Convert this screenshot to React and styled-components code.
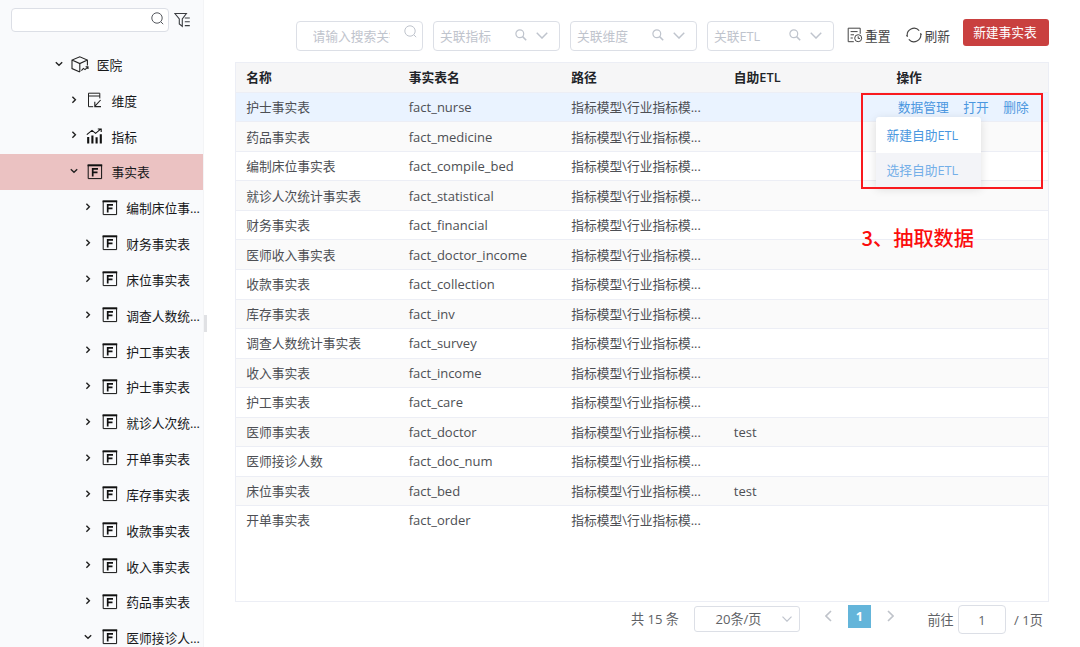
import React from 'react';
import styled, { createGlobalStyle } from 'styled-components';

const Global = createGlobalStyle`
  * { box-sizing: border-box; }
  body { margin: 0; background: #fff; overflow: hidden; }
  body, button, input { font-family: "Open Sans", "Noto Sans CJK SC", sans-serif; font-size: 12.75px; }
`;

const Page = styled.div`
  position: relative;
  display: flex;
  width: 1080px;
  height: 647px;
  overflow: hidden;
`;

/* ---------- sidebar ---------- */
const Sidebar = styled.aside`
  width: 203.5px;
  flex: none;
  overflow: hidden;
  background: #f9fafc;
  border-right: 1px solid #f3f4f6;
`;
const SideSearch = styled.div`
  display: flex;
  align-items: flex-start;
  gap: 5px;
  height: 46.8px;
  padding: 8px 0 0 11px;
`;
const SideInput = styled.div`
  display: flex;
  justify-content: flex-end;
  width: 158px;
  height: 24px;
  padding: 3px 4px 0 0;
  border: 1px solid #dcdfe6;
  border-radius: 4px;
  background: #fff;
`;
const FilterSlot = styled.div`
  padding-top: 4px;
  line-height: 0;
`;
const TreeRow = styled.div`
  display: flex;
  align-items: center;
  height: 35.84px;
  padding-left: ${p => 54 + p.$depth * 14.7}px;
  background: ${p => (p.$active ? '#ebc2c2' : 'transparent')};
  color: #17181a;
  white-space: nowrap;
`;
const TreeIcon = styled.span`
  display: flex;
  width: 18px;
  justify-content: center;
  margin: -1px 7.6px 0 7.2px;
`;
const TreeLabel = styled.span`
  line-height: 18px;
  padding-top: 0.4px;
`;
const Handle = styled.div`
  align-self: flex-start;
  width: 3px;
  height: 17px;
  margin-top: 315px;
  background: #e0e1e4;
`;

/* ---------- main ---------- */
const Main = styled.main`
  width: 814px;
  margin-left: 28.5px;
  display: flex;
  flex-direction: column;
`;
const Toolbar = styled.div`
  display: flex;
  align-items: flex-start;
  height: 61.5px;
  padding: 21px 0 0 61px;
`;
const Field = styled.div`
  display: flex;
  align-items: center;
  width: 127px;
  height: 30px;
  margin-right: 10px;
  padding: 0 11px 0 ${p => p.$indent || 6}px;
  border: 1px solid #dcdfe6;
  border-radius: 4px;
  color: #bfc4cd;
  background: #fff;
  svg { flex: none; }
`;
const Placeholder = styled.span`
  flex: 1;
  overflow: hidden;
  white-space: nowrap;
  line-height: 18px;
`;
const KeywordText = styled(Placeholder)`
  flex: none;
  width: 77px;
  margin-right: 14px;
`;
const FieldIcons = styled.span`
  display: flex;
  align-items: center;
  gap: 9px;
  margin-top: -2px;
`;
const LiftedIcon = styled.span`
  display: flex;
  margin-top: -9px;
`;
const ToolAction = styled.div`
  display: flex;
  align-items: center;
  gap: ${p => p.$space}px;
  height: 28px;
  margin-left: ${p => p.$gap}px;
  color: #444;
  white-space: nowrap;
`;
const Primary = styled.button`
  width: 86px;
  height: 27px;
  margin: -2px 0 0 auto;
  padding: 0 2px 0 0;
  border: 0;
  border-radius: 3px;
  background: #c9403f;
  color: #fff;
  line-height: 27px;
`;

const Table = styled.div`
  height: 540.5px;
  border: 1px solid #eceef5;
`;
const Row = styled.div`
  display: grid;
  grid-template-columns: repeat(5, 162.55px);
  align-items: center;
  height: 29.52px;
  border-bottom: 1px solid #eceef5;
  background: ${p => p.$bg || '#fff'};
  color: #4d4f54;
  font-weight: ${p => (p.$head ? 600 : 400)};
  ${p => p.$head && 'color: #222428; height: 30.4px;'}
  &:last-child { border-bottom-color: transparent; }
`;
const Cell = styled.div`
  padding-left: 10.2px;
  white-space: nowrap;
  line-height: 18px;
`;
const Latin = styled(Cell)`
  font-size: 13px;
`;
const Links = styled(Cell)`
  display: flex;
  gap: 14.5px;
  padding-left: 11.5px;
  color: #4a97e0;
`;

const Pager = styled.div`
  display: flex;
  align-items: flex-start;
  padding-left: 396px;
  color: #606266;
`;
const PagerText = styled.span`
  flex: none;
  width: ${p => p.$width}px;
  margin-top: ${p => p.$top}px;
  font-size: 13.1px;
  line-height: 18px;
  white-space: nowrap;
`;
const SizeSelect = styled.div`
  display: flex;
  flex: none;
  align-items: center;
  justify-content: space-between;
  width: 106px;
  height: 26px;
  margin: 3.5px 25px 0 15px;
  padding: 0 7px 0 20.5px;
  border: 1px solid #dcdfe6;
  border-radius: 3px;
  font-size: 13.1px;
`;
const PageArrow = styled.span`
  margin-top: 8px;
  line-height: 0;
`;
const Current = styled.span`
  flex: none;
  width: 23px;
  height: 23px;
  margin: 2.5px 15.5px 0 16px;
  background: #64b5da;
  color: #fff;
  font-weight: 700;
  line-height: 23px;
  text-align: center;
`;
const JumpBox = styled.span`
  flex: none;
  width: 48px;
  height: 29px;
  margin: 2.5px 8px 0 4.5px;
  border: 1px solid #dcdfe6;
  border-radius: 4px;
  line-height: 28px;
  text-align: center;
`;
const JumpLabel = styled(PagerText)`
  margin-left: 34px;
`;

/* ---------- overlays ---------- */
const Menu = styled.div`
  position: absolute;
  left: 876px;
  top: 117px;
  width: 105px;
  height: 70px;
  border-radius: 3px 3px 0 0;
  background: #fff;
  box-shadow: 0 2px 10px rgba(0, 0, 0, 0.12);
`;
const MenuItem = styled.div`
  height: ${p => (p.$hover ? 34 : 36)}px;
  padding-left: 10.5px;
  line-height: ${p => (p.$hover ? 35 : 37)}px;
  background: ${p => (p.$hover ? '#f3f4f8' : 'transparent')};
  color: ${p => (p.$hover ? '#74afe8' : '#4a97e0')};
`;
const Highlight = styled.div`
  position: absolute;
  left: 861px;
  top: 93px;
  width: 182px;
  height: 96px;
  border: 2px solid #f91a1f;
`;
const Note = styled.div`
  position: absolute;
  left: 861.5px;
  top: 224px;
  color: #fb0d0d;
  font-family: "Noto Sans CJK SC", sans-serif;
  font-size: 20.2px;
  font-weight: 500;
  line-height: 28px;
  white-space: nowrap;
`;

/* ---------- icons ---------- */
const Chevron = ({ w = 10, h = 6, color = '#bfc4cd', sw = 1.2 }) => (
  <svg width={w} height={h} viewBox="0 0 10 6" fill="none" stroke={color} strokeWidth={sw}>
    <path d="M0.5 0.6 5 5.2 9.5 0.6" />
  </svg>
);
const TreeArrow = ({ open }) => (
  <svg width="10" height="10" viewBox="0 0 10 10" fill="none" stroke="#222" strokeWidth="1.4">
    <path d={open ? 'M1.8 2.2 5 5.2 8.2 2.2' : 'M3.4 0.8 6.4 3.8 3.4 6.8'} />
  </svg>
);
const RoundSearch = ({ color, size = 13 }) => (
  <svg width={size} height={size} viewBox="0 0 13 13" fill="none" stroke={color} strokeWidth="1">
    <circle cx="6" cy="6" r="5.2" />
    <path d="M9.8 9.8 12.2 12.2" />
  </svg>
);
const SmallSearch = () => (
  <svg width="12" height="12" viewBox="0 0 12 12" fill="none" stroke="#bfc4cd" strokeWidth="1.2">
    <circle cx="4.8" cy="4.8" r="3.9" />
    <path d="M7.6 7.6 11.2 11.2" strokeWidth="1.5" />
  </svg>
);
const FilterIcon = () => (
  <svg width="17" height="16" viewBox="0 0 17 16" fill="none" stroke="#3a3c40" strokeWidth="1.1">
    <path d="M0.9 1.5H12.4L8.3 7V14.3L5.3 12V7Z" />
    <path d="M10.8 6H15.8M10.8 9.8H15.8M10.8 13.6H15.8" />
  </svg>
);
const CubeIcon = () => (
  <svg width="18" height="17" viewBox="0 0 18 17" fill="none" stroke="#222" strokeWidth="1.1">
    <path d="M8.8 16 1 12.6V4.1L8.8 0.8 16.4 4.1V9.6M1 4.1 8.8 7.6 16.4 4.1M8.8 7.6V16" />
    <path d="M10.4 14.6 12.4 12.4 14 13.6 17 10.8M14.6 10.8H17V13" />
  </svg>
);
const DimensionIcon = () => (
  <svg width="16" height="16" viewBox="0 0 16 16" fill="none" stroke="#222" strokeWidth="1">
    <path d="M6.2 14.7H1.5V1.2H12.8V6.4M1.5 4H12.8" />
    <path d="M13.6 8 8 14.2M7.8 9.8V14.6H14" strokeWidth="1.1" />
  </svg>
);
const MetricIcon = () => (
  <svg width="17" height="16" viewBox="0 0 17 16" fill="none" stroke="#111">
    <path d="M2.2 9V15.5M6.4 7.6V15.5M10.6 9.2V15.5M14.8 6.2V15.5" strokeWidth="2.1" />
    <path d="M0.8 6.6 6 2.4 9.6 5.4 14.6 1.2M11.8 1H15.2V4" strokeWidth="1.1" />
  </svg>
);
const FactIcon = () => (
  <svg width="16" height="16" viewBox="0 0 16 16" fill="none" stroke="#111">
    <path d="M1.2 1V14.6H14.6V1" strokeWidth="1" />
    <path d="M0.6 1.3H15.2" strokeWidth="2" />
    <path d="M5.7 12.4V4.9H11M5.7 8.4H10.5" strokeWidth="1.7" />
  </svg>
);
const ResetIcon = () => (
  <svg width="16" height="16" viewBox="0 0 16 16" fill="none" stroke="#444" strokeWidth="1">
    <path d="M6.8 14.7H1.2V1.2H13.2V6.8M3.6 4.6H10.6M3.6 7.8H7M3.6 11H5.8" />
    <circle cx="11.2" cy="11.2" r="3.5" />
    <path d="M11.2 9.3V11.4H13" />
  </svg>
);
const RefreshIcon = () => (
  <svg width="16" height="16" viewBox="0 0 16 16" fill="none" stroke="#444" strokeWidth="1.1">
    <path d="M1.4 9.6A6.8 6.8 0 0 1 13.2 3.7M14.6 6.4A6.8 6.8 0 0 1 2.8 12.3" />
    <path d="M0.4 8.2 1.4 9.7M15.6 7.8 14.6 6.3" strokeWidth="0.9" />
  </svg>
);
const PageChevron = ({ next }) => (
  <svg width="7" height="12" viewBox="0 0 7 12" fill="none" stroke="#bfc3ca" strokeWidth="1.6">
    <path d={next ? 'M1 1 6 6 1 11' : 'M6 1 1 6 6 11'} />
  </svg>
);

const tree = [
  [0, '医院', CubeIcon, true],
  [1, '维度', DimensionIcon],
  [1, '指标', MetricIcon],
  [1, '事实表', FactIcon, true, true],
  ...['编制床位事...', '财务事实表', '床位事实表', '调查人数统...', '护工事实表', '护士事实表', '就诊人次统...',
    '开单事实表', '库存事实表', '收款事实表', '收入事实表', '药品事实表'].map(n => [2, n, FactIcon]),
  [2, '医师接诊人...', FactIcon, true],
];

const facts = [
  ['护士事实表', 'fact_nurse'],
  ['药品事实表', 'fact_medicine'],
  ['编制床位事实表', 'fact_compile_bed'],
  ['就诊人次统计事实表', 'fact_statistical'],
  ['财务事实表', 'fact_financial'],
  ['医师收入事实表', 'fact_doctor_income'],
  ['收款事实表', 'fact_collection'],
  ['库存事实表', 'fact_inv'],
  ['调查人数统计事实表', 'fact_survey'],
  ['收入事实表', 'fact_income'],
  ['护工事实表', 'fact_care'],
  ['医师事实表', 'fact_doctor', 'test'],
  ['医师接诊人数', 'fact_doc_num'],
  ['床位事实表', 'fact_bed', 'test'],
  ['开单事实表', 'fact_order'],
];

const rowColor = i => (i === 0 ? '#eaf3ff' : i % 2 ? '#fafafa' : '#fff');

export default function App() {
  return (
    <>
      <Global />
      <Page>
        <Sidebar>
          <SideSearch>
            <SideInput><RoundSearch color="#55585e" /></SideInput>
            <FilterSlot><FilterIcon /></FilterSlot>
          </SideSearch>
          {tree.map(([depth, label, Icon, open, active]) => (
            <TreeRow key={label} $depth={depth} $active={active}>
              <TreeArrow open={open} />
              <TreeIcon><Icon /></TreeIcon>
              <TreeLabel>{label}</TreeLabel>
            </TreeRow>
          ))}
        </Sidebar>
        <Handle />
        <Main>
          <Toolbar>
            <Field $indent={15.5}>
              <KeywordText>请输入搜索关键字</KeywordText>
              <LiftedIcon><RoundSearch color="#bfc4cd" /></LiftedIcon>
            </Field>
            {['关联指标', '关联维度', '关联ETL'].map(t => (
              <Field key={t}>
                <Placeholder>{t}</Placeholder>
                <FieldIcons><SmallSearch /><Chevron w={12} h={7} /></FieldIcons>
              </Field>
            ))}
            <ToolAction $gap={3} $space={2}><ResetIcon />重置</ToolAction>
            <ToolAction $gap={15} $space={3}><RefreshIcon />刷新</ToolAction>
            <Primary>新建事实表</Primary>
          </Toolbar>
          <Table>
            <Row $head $bg="#f6f6f7">
              {['名称', '事实表名', '路径', '自助ETL', '操作'].map(h => <Cell key={h}>{h}</Cell>)}
            </Row>
            {facts.map(([name, code, etl], i) => (
              <Row key={code} $bg={rowColor(i)}>
                <Cell>{name}</Cell>
                <Latin>{code}</Latin>
                <Cell>指标模型\行业指标模...</Cell>
                <Latin>{etl}</Latin>
                {i === 0 && <Links><span>数据管理</span><span>打开</span><span>删除</span></Links>}
              </Row>
            ))}
          </Table>
          <Pager>
            <PagerText $top={8} $width={48}>共 15 条</PagerText>
            <SizeSelect>20条/页<Chevron /></SizeSelect>
            <PageArrow><PageChevron /></PageArrow>
            <Current>1</Current>
            <PageArrow><PageChevron next /></PageArrow>
            <JumpLabel $top={9} $width={26}>前往</JumpLabel>
            <JumpBox>1</JumpBox>
            <PagerText $top={9} $width={30}>/ 1页</PagerText>
          </Pager>
        </Main>
        <Menu>
          <MenuItem>新建自助ETL</MenuItem>
          <MenuItem $hover>选择自助ETL</MenuItem>
        </Menu>
        <Highlight />
        <Note>3、抽取数据</Note>
      </Page>
    </>
  );
}
